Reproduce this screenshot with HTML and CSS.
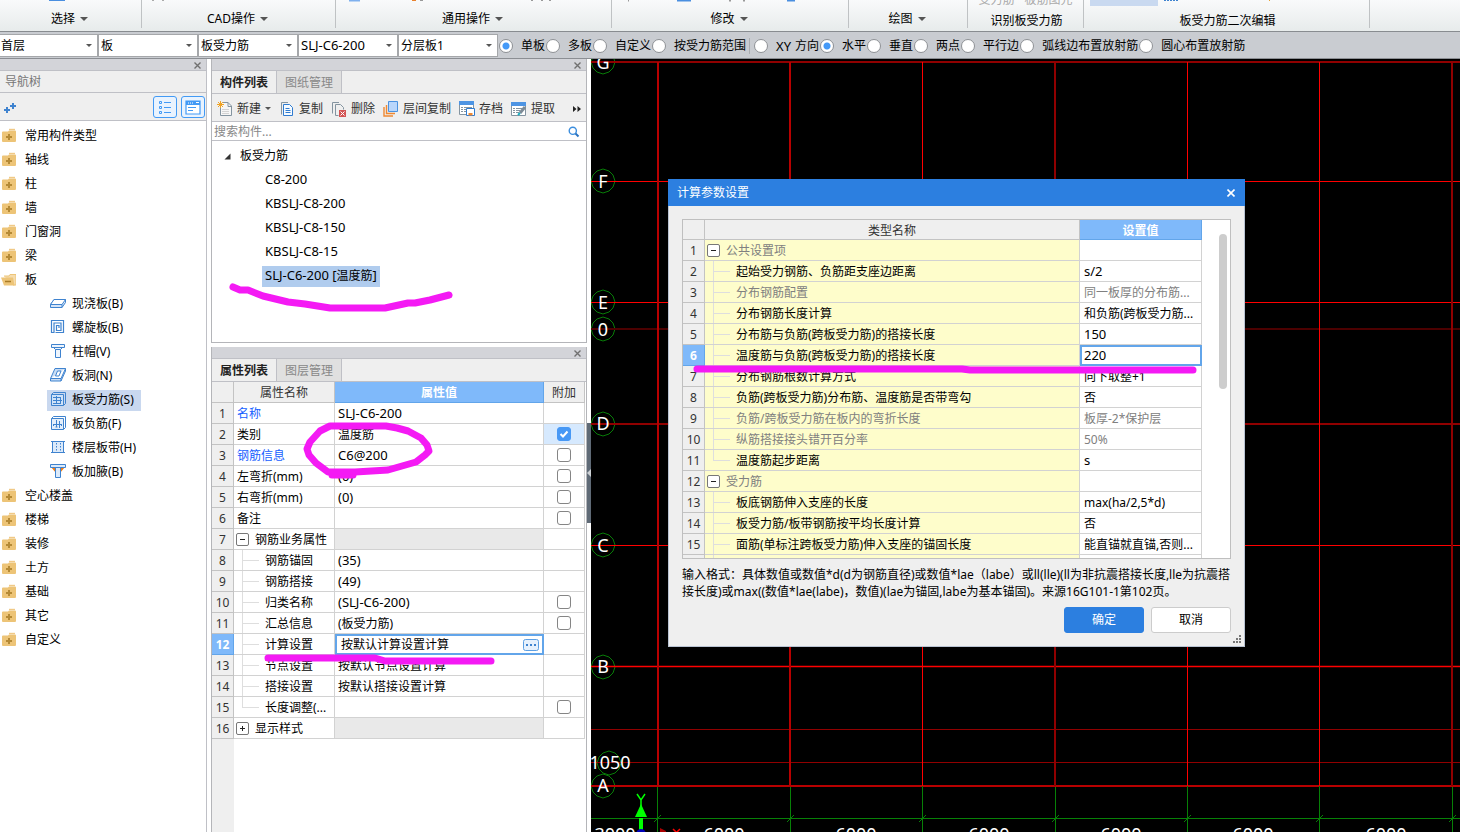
FILE: index.html
```html
<!DOCTYPE html>
<html lang="zh-CN">
<head>
<meta charset="utf-8">
<title>计算参数设置</title>
<link rel="stylesheet" href="styles.css">
</head>
<body>
<svg class="defs" aria-hidden="true">
  <symbol id="folder" viewBox="0 1 16 16"><path d="M9 2.500h6" stroke="#f0c987" stroke-width="1.400"/><path d="M2 5.500q0-1 1-1h5l1-1h6q1 0 1 1V14q0 1-1 1H3q-1 0-1-1z" fill="#edc477"/><path d="M9 7v6M6 10h6" stroke="#b58a36" stroke-width="2"/></symbol>
  <symbol id="folder-open" viewBox="0 1 16 16"><path d="M4 5h5l1-1.500h6v10.500h-3" fill="#f5dcae" stroke="#edc477"/><path d="M1 6.500h12l1.500 8H4z" fill="#edc477"/><path d="M5 10.500h6" stroke="#a97c28" stroke-width="1.500"/></symbol>
  <symbol id="slab" viewBox="0 1 16 16"><path d="M.5 9.500L4 4.500h11.500v3L12 12.500H.5z" fill="#d5e5f8" stroke="#3f83cf"/><path d="M.5 9.500L4 4.500h11.500L12 9.500z" fill="#fff" stroke="#3f83cf"/><path d="M12 9.500v3" stroke="#3f83cf"/></symbol>
  <symbol id="spiral" viewBox="0 1 16 16"><path d="M5.500 13.500h8v-12h-12v12h2.500v-9.500h7v7.500H6.500v-5h2.500v2.500" fill="none" stroke="#3f83cf" stroke-width="1.200"/></symbol>
  <symbol id="cap" viewBox="0 1 16 16"><path d="M1.500 1.500h13v3h-13zM3.500 4.500l2 2h5l2-2M5.500 6.500v8h5v-8" fill="#eef5fd" stroke="#3f83cf"/></symbol>
  <symbol id="hole" viewBox="0 1 16 16"><path d="M.5 11.500L5 1.500h10.500L11 11.500zM.5 11.500v2.500H11l4.500-10V1.500M11 11.500V14" fill="#c8ddf5" stroke="#3f83cf"/><path d="M5.500 9l2-5h3.500L9 9z" fill="#fff" stroke="#3f83cf"/></symbol>
  <symbol id="rebar" viewBox="0 1 16 16"><path d="M1.500 3.500l2-2h12v11l-2 2" fill="none" stroke="#3f83cf"/><path d="M1.500 3.500h12v11h-12z" fill="#cfe2f8" stroke="#3f83cf"/><path d="M3 6.500h7M3 9.500h9M3 12.500h7M6.500 5v8M10.500 6v7" stroke="#3f83cf"/></symbol>
  <symbol id="neg" viewBox="0 1 16 16"><path d="M1.500 3.500l2-2h12v11l-2 2" fill="none" stroke="#3f83cf"/><path d="M1.500 3.500h12v11h-12z" fill="#e4effb" stroke="#3f83cf"/><path d="M3 9.500h9M6.500 5v7M9.500 6v7M3.500 9v2M11.500 9v2M5.500 12h2" stroke="#3f83cf"/></symbol>
  <symbol id="band" viewBox="0 1 16 16"><path d="M2 3h12v10H2z" fill="#dceafa"/><path d="M1 2.500h14M1 13.500h14M2.500 3v10M13.500 3v10" stroke="#3f83cf"/><path d="M6.500 4v9M10.500 4v9" stroke="#3f83cf" stroke-dasharray="1.500 1.500"/></symbol>
  <symbol id="haunch" viewBox="0 1 16 16"><path d="M1 4l5 6V5h4v5l5-6z" fill="#f27c13"/><path d="M.5 1.500h15v3h-15z" fill="#dceafa" stroke="#3f83cf"/><path d="M5.500 4.500h5v10h-5z" fill="#dceafa" stroke="#3f83cf"/></symbol>
  <symbol id="new" viewBox="0 0 16 16"><path d="M5 1.500h6l3.500 3.500v9.500h-11V7" fill="#f6f6f6" stroke="#8494a0"/><path d="M11 1.500v4h4" fill="none" stroke="#8494a0"/><path d="M5 8.500h7M5 10.500h7M5 12.500h7" stroke="#d3d3d3"/><path d="M1 1l5 5M6 1L1 6M3.500 0v7M0 3.500h7" stroke="#f0a324"/></symbol>
  <symbol id="copy" viewBox="0 0 16 16"><path d="M2.500 13.500v-12H9" fill="none" stroke="#8494a0"/><path d="M4.500 3.500h6l3 3v8h-9z" fill="#f5faff" stroke="#2f7bd0"/><path d="M6.500 7.500h4M6.500 9.500h5M6.500 11.500h5" stroke="#2f7bd0"/></symbol>
  <symbol id="del" viewBox="0 0 16 16"><path d="M1.500 12.500v-11H8M4.500 14.500v-11h5l3 3v2M4.500 14.500h3" fill="none" stroke="#8494a0"/><path d="M8 9h7v7H8z" fill="#d35353"/><path d="M9.500 10.500l4 4M13.500 10.500l-4 4" stroke="#fff"/></symbol>
  <symbol id="layers" viewBox="0 0 16 16"><path d="M1 6v9h9M3.500 4v8.500H12" fill="none" stroke="#ef8933" stroke-width="1.400"/><path d="M5.500.5h9v10h-9z" fill="#b9d6fb" stroke="#4b92e0"/></symbol>
  <symbol id="save" viewBox="0 0 16 16"><path d="M.5 1.500h14v12H.5z" fill="#fff" stroke="#8494a0"/><path d="M0 0h15v4H0z" fill="#4d94e3"/><path d="M2 6.500h2M5 6.500h8M2 8.500h2M5 8.500h2M2 10.500h2M5 10.500h2" stroke="#8494a0"/><path d="M7.500 7.500h8v7h-8z" fill="#fff" stroke="#2f7bd0"/><path d="M9.500 12h4v2.500h-4z" fill="#ef8933"/></symbol>
  <symbol id="extract" viewBox="0 0 16 16"><path d="M.5 2.500h14v12H.5z" fill="#fff" stroke="#8494a0"/><path d="M0 1h15v4H0z" fill="#4d94e3"/><path d="M2 7.500h2M5 7.500h6M2 9.500h2M5 9.500h4M2 11.500h2M5 11.500h3" stroke="#8494a0"/><path d="M9 12l5-6" stroke="#7d8b96" stroke-width="3"/><path d="M7 14l2-2" stroke="#19aebf" stroke-width="2"/></symbol>
  <symbol id="cross" viewBox="0 0 7 7"><path d="M.5.5l6 6M6.500.5l-6 6" stroke="#707070" stroke-width="1.400"/></symbol>
</svg>

<header class="ribbon">
  <section class="group g1"><svg class="strip"><path d="M49 0h16" stroke="#4a8fe0" stroke-width="2"/></svg><button class="menu">选择</button></section>
  <section class="group g2"><svg class="strip"><path d="M10 .5h2M20 .5h2" stroke="#aaa"/></svg><button class="menu">CAD操作</button></section>
  <section class="group g3"><svg class="strip"><path d="M13 0h11" stroke="#7fb0ee" stroke-width="3"/><path d="M76 .5h4" stroke="#e9822e"/><path d="M84 .5h3M195 .5h2M205 .5h2M213 .5h2" stroke="#999"/></svg><button class="menu">通用操作</button></section>
  <section class="group g4"><svg class="strip"><path d="M16 .5h1M117 .5h2M131 .5h2" stroke="#999" stroke-width="2"/><path d="M65 0h14M175 0h8" stroke="#4a8fe0" stroke-width="3"/></svg><button class="menu">修改</button></section>
  <section class="group g5"><div class="strip"></div><button class="menu">绘图</button></section>
  <section class="group g6"><div class="strip cut"><span>受力筋</span><span>板筋图元</span></div><span class="caption">识别板受力筋</span></section>
  <section class="group g7"><svg class="strip"><path d="M6 0h68v6H6z" fill="#c9d9f0"/><path d="M80 .5h14" stroke="#3f83cf" stroke-dasharray="2 1"/><path d="M185 .5h1" stroke="#e9a22e"/></svg><span class="caption">板受力筋二次编辑</span></section>
  <section class="group g8"></section>
</header>

<form class="options">
  <select aria-label="楼层"><option>首层</option></select>
  <select aria-label="构件类型"><option>板</option></select>
  <select aria-label="构件"><option>板受力筋</option></select>
  <select aria-label="构件名称" class="latin"><option>SLJ-C6-200</option></select>
  <select aria-label="分层"><option>分层板1</option></select>
  <label><input type="radio" name="range" checked>单板</label>
  <label><input type="radio" name="range">多板</label>
  <label><input type="radio" name="range">自定义</label>
  <label><input type="radio" name="range">按受力筋范围</label>
  <span class="divider"></span>
  <label class="xy"><input type="radio" name="dir0"><span class="latin">XY</span>方向</label>
  <label><input type="radio" name="dir" checked>水平</label>
  <label><input type="radio" name="dir">垂直</label>
  <label><input type="radio" name="dir">两点</label>
  <label><input type="radio" name="dir">平行边</label>
  <label><input type="radio" name="dir">弧线边布置放射筋</label>
  <label><input type="radio" name="dir">圆心布置放射筋</label>
</form>

<main class="work">
  <aside class="nav">
    <div class="grip"><button aria-label="关闭"><svg><use href="#cross"/></svg></button></div>
    <h2 class="navtitle">导航树</h2>
    <div class="navtools">
      <svg class="plus" viewBox="0 0 14 12"><path d="M4 6v6M1 9h6M10 2v6M7 5h6" stroke="#3f83cf" stroke-width="2"/></svg>
      <button class="view" aria-label="列表"><svg viewBox="0 0 16 16"><path d="M2.500 2.500h2v2h-2zM2.500 7.500h2v2h-2zM2.500 12.500h2v2h-2zM7 3.500h7M7 8.500h7M7 13.500h7" fill="none" stroke="#429af5"/></svg></button>
      <button class="view" aria-label="窗口"><svg viewBox="0 0 16 16"><path d="M1 2h14v13H1z" fill="#fff" stroke="#429af5" stroke-width="1.200"/><path d="M1 2h14v4H1z" fill="#429af5"/><path d="M3 4h1M5 4h1M7 4h1M11 3.500h3" stroke="#fff"/><path d="M3 8.500h8M3 11.500h5" stroke="#429af5"/></svg></button>
    </div>
    <ul class="tree">
      <li><svg><use href="#folder"/></svg>常用构件类型</li>
      <li><svg><use href="#folder"/></svg>轴线</li>
      <li><svg><use href="#folder"/></svg>柱</li>
      <li><svg><use href="#folder"/></svg>墙</li>
      <li><svg><use href="#folder"/></svg>门窗洞</li>
      <li><svg><use href="#folder"/></svg>梁</li>
      <li><svg><use href="#folder-open"/></svg>板</li>
      <li class="sub"><span><svg><use href="#slab"/></svg>现浇板(B)</span></li>
      <li class="sub"><span><svg><use href="#spiral"/></svg>螺旋板(B)</span></li>
      <li class="sub"><span><svg><use href="#cap"/></svg>柱帽(V)</span></li>
      <li class="sub"><span><svg><use href="#hole"/></svg>板洞(N)</span></li>
      <li class="sub"><span class="on"><svg><use href="#rebar"/></svg>板受力筋(S)</span></li>
      <li class="sub"><span><svg><use href="#neg"/></svg>板负筋(F)</span></li>
      <li class="sub"><span><svg><use href="#band"/></svg>楼层板带(H)</span></li>
      <li class="sub"><span><svg><use href="#haunch"/></svg>板加腋(B)</span></li>
      <li><svg><use href="#folder"/></svg>空心楼盖</li>
      <li><svg><use href="#folder"/></svg>楼梯</li>
      <li><svg><use href="#folder"/></svg>装修</li>
      <li><svg><use href="#folder"/></svg>土方</li>
      <li><svg><use href="#folder"/></svg>基础</li>
      <li><svg><use href="#folder"/></svg>其它</li>
      <li><svg><use href="#folder"/></svg>自定义</li>
    </ul>
  </aside>

  <div class="middle">
    <section class="panel">
      <div class="grip"><button aria-label="关闭"><svg><use href="#cross"/></svg></button></div>
      <div class="tabs"><button class="active">构件列表</button><button>图纸管理</button></div>
      <div class="tools">
        <button class="drop"><svg><use href="#new"/></svg>新建</button>
        <button><svg><use href="#copy"/></svg>复制</button>
        <button><svg><use href="#del"/></svg>删除</button>
        <button><svg><use href="#layers"/></svg>层间复制</button>
        <button><svg><use href="#save"/></svg>存档</button>
        <button><svg><use href="#extract"/></svg>提取</button>
        <button class="more" aria-label="更多"><svg viewBox="0 0 8 6"><path d="M0 0l3.500 3L0 6zM4.500 0L8 3 4.500 6z" fill="#222"/></svg></button>
      </div>
      <div class="search"><input type="text" placeholder="搜索构件..." aria-label="搜索构件"><svg viewBox="0 0 12 12"><circle cx="4.800" cy="4.800" r="3.600" fill="none" stroke="#3b8ede" stroke-width="1.400"/><path d="M7.500 7.500l3 3" stroke="#2b74c0" stroke-width="2"/></svg></div>
      <ul class="parts">
        <li class="root"><svg viewBox="0 0 7 7"><path d="M6.500.5v6h-6z" fill="#333"/></svg>板受力筋</li>
        <li class="latin">C8-200</li>
        <li class="latin">KBSLJ-C8-200</li>
        <li class="latin">KBSLJ-C8-150</li>
        <li class="latin">KBSLJ-C8-15</li>
        <li><span class="picked"><span class="latin">SLJ-C6-200 [</span>温度筋<span class="latin">]</span></span></li>
      </ul>
    </section>

    <section class="panel props">
      <div class="grip"><button aria-label="关闭"><svg><use href="#cross"/></svg></button></div>
      <div class="tabs"><button class="active">属性列表</button><button>图层管理</button></div>
      <div class="propbody">
      <table class="grid">
        <colgroup><col class="c-no"><col class="c-name"><col><col class="c-add"></colgroup>
        <thead><tr><th></th><th>属性名称</th><th class="hot">属性值</th><th>附加</th></tr></thead>
        <tbody>
        <tr><th>1</th><td class="link">名称</td><td class="latin">SLJ-C6-200</td><td></td></tr>
        <tr><th>2</th><td>类别</td><td>温度筋</td><td class="add lit"><input type="checkbox" checked aria-label="类别附加"></td></tr>
        <tr><th>3</th><td class="link">钢筋信息</td><td class="latin">C6@200</td><td class="add"><input type="checkbox" aria-label="钢筋信息附加"></td></tr>
        <tr><th>4</th><td>左弯折(mm)</td><td class="latin">(0)</td><td class="add"><input type="checkbox" aria-label="左弯折附加"></td></tr>
        <tr><th>5</th><td>右弯折(mm)</td><td class="latin">(0)</td><td class="add"><input type="checkbox" aria-label="右弯折附加"></td></tr>
        <tr><th>6</th><td>备注</td><td></td><td class="add"><input type="checkbox" aria-label="备注附加"></td></tr>
        <tr><th>7</th><td class="fold"><button class="toggle" aria-label="折叠"></button>钢筋业务属性</td><td class="dim"></td><td></td></tr>
        <tr><th>8</th><td class="leaf">钢筋锚固</td><td class="latin">(35)</td><td></td></tr>
        <tr><th>9</th><td class="leaf">钢筋搭接</td><td class="latin">(49)</td><td></td></tr>
        <tr><th>10</th><td class="leaf">归类名称</td><td class="latin">(SLJ-C6-200)</td><td class="add"><input type="checkbox" aria-label="归类名称附加"></td></tr>
        <tr><th>11</th><td class="leaf">汇总信息</td><td>(板受力筋)</td><td class="add"><input type="checkbox" aria-label="汇总信息附加"></td></tr>
        <tr><th class="cur">12</th><td class="leaf">计算设置</td><td class="edit"><div><input type="text" value="按默认计算设置计算" aria-label="计算设置"><button aria-label="浏览"><svg viewBox="0 0 16 12"><rect x=".5" y=".5" width="15" height="11" rx="2" fill="#e6f1fd" stroke="#5d9fe3"/><path d="M3 6h2M7 6h2M11 6h2" stroke="#3f83cf" stroke-width="2"/></svg></button></div></td><td></td></tr>
        <tr><th>13</th><td class="leaf">节点设置</td><td>按默认节点设置计算</td><td></td></tr>
        <tr><th>14</th><td class="leaf">搭接设置</td><td>按默认搭接设置计算</td><td></td></tr>
        <tr><th>15</th><td class="leaf end">长度调整(...</td><td></td><td class="add"><input type="checkbox" aria-label="长度调整附加"></td></tr>
        <tr><th>16</th><td class="fold"><button class="toggle shut" aria-label="展开"></button>显示样式</td><td class="dim"></td><td></td></tr>
        </tbody>
      </table>
      </div>
    </section>
  </div>

  <div class="splitter"><button aria-label="收起"><svg viewBox="0 0 4 8"><path d="M4 0v8L0 4z" fill="#ccd0d4"/></svg></button></div>

  <section class="canvas">
    <svg class="plan">
      <g fill="none" stroke="#087c08">
        <path id="ring" d="M12-9L18-7 22-3 24 3 22 9 18 13 12 15 6 13 2 9 0 3 2-3 6-7z"/>
        <use href="#ring" y="119"/><use href="#ring" y="240"/><use href="#ring" y="267"/><use href="#ring" y="362"/><use href="#ring" y="483"/><use href="#ring" y="605"/><use href="#ring" y="724"/><use href="#ring" x="6" y="701"/>
      </g>
      <g fill="none">
        <path d="M0 3h4000M0 365h4000" stroke="#900000" stroke-width="2"/>
        <path d="M0 122.500h4000M0 243.500h4000M0 486.500h4000" stroke="#f00"/>
        <path d="M0 270h4000" stroke="#4c0000" stroke-width="2"/>
        <path d="M0 607.500h4000" stroke="#f00" stroke-width="1.500"/>
        <path d="M0 670.500h4000M0 703.500h4000" stroke="#900000"/>
        <path d="M0 727h4000" stroke="#b80000" stroke-width="2"/>
        <path d="M67 3v724M199 3v724" stroke="#b80000" stroke-width="2"/>
        <path d="M331.500 3v724M596.500 3v724M728.500 3v724" stroke="#f00"/>
        <path d="M464 3v724M861 3v724" stroke="#900000" stroke-width="2"/>
        <path d="M0 759.500h4000M66.500 728v100M199.500 728v100M331.500 727v100M464.500 728v100M596.500 727v100M728.500 727v100M861.500 728v100M63 763l7-7M196 763l7-7M328 763l7-7M461 763l7-7M593 763l7-7M725 763l7-7M858 763l7-7" stroke="#078007"/>
      </g>
      <g class="axis">
        <text x="12" y="10">G</text><text x="12" y="129">F</text><text x="12" y="250">E</text><text x="12" y="277">0</text><text x="12" y="371">D</text><text x="12" y="493">C</text><text x="12" y="614">B</text><text x="19" y="710">1050</text><text x="12" y="733">A</text>
        <text x="24" y="782">3000</text><text x="133" y="782">6000</text><text x="265" y="782">6000</text><text x="398" y="782">6000</text><text x="530" y="782">6000</text><text x="662" y="782">6000</text><text x="795" y="782">6000</text>
      </g>
      <path d="M50 773v-14" stroke="#0f0" stroke-width="4"/><path d="M44 758l6-13 6 13z" fill="#0f0"/>
      <path d="M46 735l4 6 4-6M50 741v6" fill="none" stroke="#0f0" stroke-width="1.500"/>
      <circle cx="50" cy="775" r="5" fill="#0000b8"/><path d="M69 769l6 3v2h-6z" fill="#a00"/><path d="M82 770l7 7M89 770l-7 7" stroke="#f00" stroke-width="1.500"/>
    </svg>

    <div class="dialog" role="dialog" aria-label="计算参数设置">
      <header><h1>计算参数设置</h1><button aria-label="关闭"><svg viewBox="0 0 8 8"><path d="M.5.5l7 7M7.500.5l-7 7" stroke="#fff" stroke-width="1.600"/></svg></button></header>
      <div class="content">
        <div class="sheet">
          <table class="grid params">
            <colgroup><col class="c-no"><col><col class="c-val"></colgroup>
            <thead><tr><th></th><th>类型名称</th><th class="hot">设置值</th></tr></thead>
            <tbody>
            <tr class="soft"><th>1</th><td class="fold"><button class="toggle" aria-label="折叠"></button>公共设置项</td><td></td></tr>
            <tr><th>2</th><td class="leaf">起始受力钢筋、负筋距支座边距离</td><td class="latin">s/2</td></tr>
            <tr class="soft"><th>3</th><td class="leaf">分布钢筋配置</td><td>同一板厚的分布筋...</td></tr>
            <tr><th>4</th><td class="leaf">分布钢筋长度计算</td><td>和负筋(跨板受力筋...</td></tr>
            <tr><th>5</th><td class="leaf">分布筋与负筋(跨板受力筋)的搭接长度</td><td class="latin">150</td></tr>
            <tr><th class="cur">6</th><td class="leaf">温度筋与负筋(跨板受力筋)的搭接长度</td><td class="edit latin"><div><input type="text" value="220" aria-label="搭接长度"></div></td></tr>
            <tr><th>7</th><td class="leaf">分布钢筋根数计算方式</td><td>向下取整+1</td></tr>
            <tr><th>8</th><td class="leaf">负筋(跨板受力筋)分布筋、温度筋是否带弯勾</td><td>否</td></tr>
            <tr class="soft"><th>9</th><td class="leaf">负筋/跨板受力筋在板内的弯折长度</td><td>板厚-2*保护层</td></tr>
            <tr class="soft"><th>10</th><td class="leaf">纵筋搭接接头错开百分率</td><td>50%</td></tr>
            <tr><th>11</th><td class="leaf end">温度筋起步距离</td><td class="latin">s</td></tr>
            <tr class="soft"><th>12</th><td class="fold"><button class="toggle" aria-label="折叠"></button>受力筋</td><td></td></tr>
            <tr><th>13</th><td class="leaf">板底钢筋伸入支座的长度</td><td>max(ha/2,5*d)</td></tr>
            <tr><th>14</th><td class="leaf">板受力筋/板带钢筋按平均长度计算</td><td>否</td></tr>
            <tr><th>15</th><td class="leaf">面筋(单标注跨板受力筋)伸入支座的锚固长度</td><td>能直锚就直锚,否则...</td></tr>
            <tr><th></th><td class="leaf"></td><td></td></tr>
            </tbody>
          </table>
          <div class="scroll"><div class="thumb"></div></div>
        </div>
        <p class="note">输入格式：具体数值或数值*d(d为钢筋直径)或数值*lae（labe）或ll(lle)(ll为非抗震搭接长度,lle为抗震搭接长度)或max((数值*lae(labe)，数值)(lae为锚固,labe为基本锚固)。来源16G101-1第102页。</p>
        <div class="actions"><button class="ok">确定</button><button>取消</button></div>
      </div>
      <svg class="corner" viewBox="0 0 8 8"><path d="M6 0h2v2H6zM3 3h2v2H3zM6 3h2v2H6zM0 6h2v2H0zM3 6h2v2H3zM6 6h2v2H6z" fill="#777"/></svg>
    </div>
  </section>
</main>

<svg class="marks" aria-hidden="true">
  <g fill="none" stroke="#f41af4" stroke-width="7" stroke-linecap="round" stroke-linejoin="round">
    <path d="M233 287L240 290 248 290 263 296 288 302 305 304 330 308 385 308 408 303 415 303 430 300 449 295"/>
    <path d="M330 426L386 426 397 428 408 431 421 438 427 445 429 451 425 455 416 462 388 470 355 472 328 472 316 463 309 455 307 449 310 442 320 431z"/>
    <path d="M332 475h21"/>
    <path d="M268 658L375 658 385 661 491 661"/>
    <path d="M697 369L962 369 970 370 1193 370"/>
  </g>
</svg>
</body>
</html>
```
FILE: styles.css
```css
* { box-sizing: border-box; }

body {
  margin: 0;
  min-height: 100vh;
  display: flex;
  flex-direction: column;
  position: relative;
  background: #fff;
  color: #000;
  font: 12px/16px "Noto Sans", "Noto Sans CJK SC", sans-serif;
  overflow: hidden;
}

button, input, select { font: inherit; color: inherit; margin: 0; }
button { border: 0; background: none; padding: 0; }
ul { list-style: none; margin: 0; padding: 0; }
h1, h2, p { margin: 0; font-size: inherit; font-weight: normal; }
svg { display: block; flex: none; }
.latin { font-size: 13px; }
.defs { position: absolute; width: 0; height: 0; }

/* ribbon */
.ribbon {
  display: flex;
  height: 32px;
  background: linear-gradient(#f9fafb, #e7ebeb);
  border-bottom: 1px solid #888c90;
}
.group {
  display: flex;
  flex-direction: column;
  align-items: center;
  height: 28px;
  border-right: 1px solid #bfc2c4;
}
.g1 { width: 142px; }
.g2 { width: 194px; }
.g3 { width: 276px; }
.g4 { width: 237px; }
.g5 { width: 119px; }
.g6 { width: 116px; }
.g7 { width: 286px; }
.g8 { flex: 1; border: 0; }
.strip { flex: none; width: 100%; height: 6px; overflow: hidden; }
.cut { display: flex; justify-content: center; gap: 10px; color: #aaa; }
.cut span { margin-top: -8px; }
.menu { display: flex; align-items: center; gap: 5px; padding: 5px 2px 0 0; }
.menu::after, .drop::after {
  content: "";
  border: 4px solid transparent;
  border-top-color: #555;
  border-bottom: 0;
}
.caption { padding: 7px 0 0 2px; }

/* option bar */
.options {
  display: flex;
  align-items: center;
  height: 27px;
  padding-top: 1px;
  background: #c9ccd1;
  border-bottom: 1px solid #8b8e93;
  white-space: nowrap;
}
.options select {
  appearance: none;
  width: 100px;
  height: 23px;
  padding: 0 2px;
  border: 1px solid #a5a7aa;
  border-radius: 0;
  background: #fff url("data:image/svg+xml,%3Csvg xmlns='http://www.w3.org/2000/svg' width='6' height='3'%3E%3Cpath d='M0 0h6L3 3z' fill='%23555'/%3E%3C/svg%3E") no-repeat right 5px center;
}
.options select:first-child { width: 98px; padding-left: 1px; border-left: 0; }
.options select:nth-of-type(5) { margin-right: 1px; }
.options select.latin { padding-bottom: 2px; }
.options label { display: flex; align-items: center; margin-right: 1px; }
.options .xy .latin { margin-right: 4px; }
.options input {
  appearance: none;
  width: 14px;
  height: 14px;
  margin-right: 8px;
  border: 1px solid #8e9195;
  border-radius: 50%;
  background: #fff;
}
.options input:checked { background: radial-gradient(circle, #4499f7 3px, #fff 4px); }
.divider { width: 1px; height: 16px; margin: 0 4px 0 2px; background: #aaadb1; }

/* work area */
.work { flex: 1; display: flex; min-height: 0; }
.grip {
  display: flex;
  justify-content: flex-end;
  align-items: center;
  height: 12px;
  padding: 2px 5px 0 0;
  background: #d3d4d9;
  border-bottom: 1px solid #bfc0c6;
}
.grip svg { width: 7px; height: 7px; }

.nav { width: 207px; border-right: 1px solid #bfc0c6; }
.navtitle { height: 22px; padding: 3px 5px; background: #efefef; border-bottom: 1px solid #bfc0c6; color: #777; }
.navtools {
  display: flex;
  align-items: center;
  gap: 4px;
  height: 28px;
  padding: 0 1px 0 3px;
  background: #efefef;
  border-bottom: 1px solid #bfc0c6;
}
.plus { width: 14px; height: 12px; margin-right: auto; }
.view { padding: 2px 3px; border: 1px solid #429af5; border-radius: 3px; background: #e9f3fe; }
.view svg { width: 16px; height: 16px; }
.tree { padding-top: 3px; }
.tree li { display: flex; align-items: center; height: 24px; }
.tree svg { width: 16px; height: 16px; }
.tree > li > svg { margin-right: 9px; }
.sub { padding-left: 47px; }
.sub span { display: flex; align-items: center; gap: 6px; height: 21px; padding: 0 7px 0 3px; }
.sub .on { background: #c9d8ef; }

.middle { width: 376px; margin-left: 4px; display: flex; flex-direction: column; gap: 4px; }
.panel { border: 1px solid #b4b5b9; border-top: 0; }
.tabs { display: flex; height: 23px; background: #efefef; border-bottom: 1px solid #bfc0c6; }
.tabs button { width: 65px; padding-top: 2px; border-right: 1px solid #bfc0c6; background: #e0e0e0; color: #888; }
.tabs .active { background: #efefef; color: #222; font-weight: bold; }
.tools {
  display: flex;
  align-items: center;
  gap: 8px;
  height: 28px;
  padding: 2px 5px 0;
  background: #efefef;
  border-bottom: 1px solid #bfc0c6;
  color: #333;
}
.tools button { display: flex; align-items: center; gap: 4px; }
.tools svg { width: 16px; height: 16px; }
.drop::after { border-width: 3px; border-bottom: 0; }
.tools .more { margin-left: auto; }
.tools .more svg { width: 8px; height: 6px; }
.search { display: flex; align-items: center; height: 19px; padding: 1px 6px 0 2px; border-bottom: 1px solid #bfc0c6; }
.search input { flex: 1; min-width: 0; padding: 0; border: 0; outline: 0; background: none; }
.search input::placeholder { color: #888; opacity: 1; }
.search svg { width: 12px; height: 12px; }
.parts { min-height: 201px; padding-top: 3px; }
.parts li { display: flex; align-items: center; height: 24px; padding-left: 53px; }
.parts li.latin { padding-bottom: 2px; }
.parts .root { padding-left: 12px; gap: 9px; }
.root svg { width: 7px; height: 7px; }
.picked { height: 21px; margin-left: -3px; padding: 1px 3px 0; background: #b0ccee; }

/* tables */
.props { flex: 1; }
.propbody { min-height: 450px; background: linear-gradient(to right, #efefef 22px, #fff 22px); }
.grid { width: 100%; border-spacing: 0; table-layout: fixed; }
.props .grid { width: 373px; }
.c-no { width: 22px; }
.c-name { width: 101px; }
.c-add { width: 41px; }
.c-val { width: 122px; }
.grid th, .grid td {
  height: 21px;
  padding: 2px 3px 0;
  border: 0 solid #d2d2d2;
  border-width: 0 1px 1px 0;
  text-align: left;
  font-weight: normal;
  line-height: 16px;
  white-space: nowrap;
  overflow: hidden;
}
.grid td.latin { padding-bottom: 2px; }
.grid th { padding: 2px 0 0; background: #efefef; border-color: #c3c3c3; color: #333; text-align: center; }
.grid .hot, .grid .cur { background: #7fb9fa; border-color: #62a5ea; color: #fff; font-weight: bold; }
.grid .link { color: #1560ff; }
.grid .add { padding: 0; text-align: center; }
.grid .lit { background: #d6e9fe; }
.grid .dim { background: #e9e9e9; }
.add input {
  appearance: none;
  display: block;
  width: 14px;
  height: 14px;
  margin: 0 auto;
  border: 1px solid #858585;
  border-radius: 3px;
  background: #fff;
}
.add input:checked {
  border-color: #4798f5;
  background: #4798f5 url("data:image/svg+xml,%3Csvg xmlns='http://www.w3.org/2000/svg' width='12' height='12'%3E%3Cpath d='M2.500 6l2.500 2.500L9.500 3.500' fill='none' stroke='white' stroke-width='2'/%3E%3C/svg%3E") center no-repeat;
}
.grid .fold { padding-left: 2px; }
.toggle {
  display: inline-block;
  width: 13px;
  height: 13px;
  margin-right: 6px;
  vertical-align: -1px;
  border: 1px solid #777;
  border-radius: 2px;
  background: linear-gradient(#222, #222) center / 5px 1px no-repeat, #fff;
}
.toggle.shut {
  background: linear-gradient(#222, #222) center / 5px 1px no-repeat, linear-gradient(#222, #222) center / 1px 5px no-repeat, #fff;
}
.grid .leaf {
  padding-left: 31px;
  background: linear-gradient(#dedede, #dedede) 8px 0 / 1px 100% no-repeat, linear-gradient(#dedede, #dedede) 8px 10px / 17px 1px no-repeat;
}
.grid .end { background-size: 1px 10px, 17px 1px; }
.grid td.edit { padding: 0; border: 0; }
.edit div { display: flex; align-items: center; height: 21px; padding: 0 3px; border: 2px solid #62a5ea; background: #fff; }
.edit input { flex: 1; min-width: 0; height: 16px; padding: 0 0 0 1px; border: 0; outline: 0; background: none; }
.edit svg { width: 16px; height: 12px; }
.params .edit div { padding: 0 1px 2px; }

.splitter { width: 4px; display: flex; align-items: flex-start; }
.splitter button { width: 4px; height: 100px; margin-top: 364px; background: #5f6a76; }
.splitter svg { width: 4px; height: 8px; }

/* drawing */
.canvas { flex: 1; position: relative; overflow: hidden; background: #000; }
.plan { position: absolute; width: 100%; height: 100%; }
.axis { fill: #fff; font-size: 18px; text-anchor: middle; }

.dialog {
  position: absolute;
  left: 77px;
  top: 120px;
  width: 577px;
  border: 1px solid #b9c3d2;
  border-top: 0;
  background: #efefef;
}
.dialog header {
  display: flex;
  align-items: center;
  justify-content: space-between;
  height: 27px;
  margin: 0 -1px;
  padding: 0 10px 0 9px;
  background: #2c7fe0;
  color: #fff;
}
.dialog header svg { width: 8px; height: 8px; }
.content { padding: 13px; }
.sheet { display: flex; height: 340px; border: 1px solid #bfbfbf; background: #fff; overflow: hidden; }
.params { flex: none; width: calc(100% - 28px); height: max-content; }
.params thead th { height: 20px; }
.params tbody td:nth-child(2) { background-color: #fefdcb; }
.params tbody td:nth-child(3) { padding-left: 4px; }
.params tbody td.edit { padding: 0; }
.params .soft td { color: #808080; }
.scroll { width: 28px; padding: 14px 3px 0 17px; }
.thumb { height: 155px; border-radius: 4px; background: #cdcdcd; }
.note { padding-top: 7px; line-height: 17px; }
.actions { display: flex; justify-content: flex-end; gap: 7px; padding-top: 7px; }
.actions button { width: 80px; height: 26px; border: 1px solid #ccc; border-radius: 3px; background: #fff; }
.actions .ok { border-color: #2c7fe0; background: #2c7fe0; color: #fff; }
.corner { position: absolute; right: 3px; bottom: 3px; width: 8px; height: 8px; }

/* pen strokes drawn over the window */
.marks { position: absolute; left: 0; top: 0; width: 100%; height: 100%; pointer-events: none; }
```
